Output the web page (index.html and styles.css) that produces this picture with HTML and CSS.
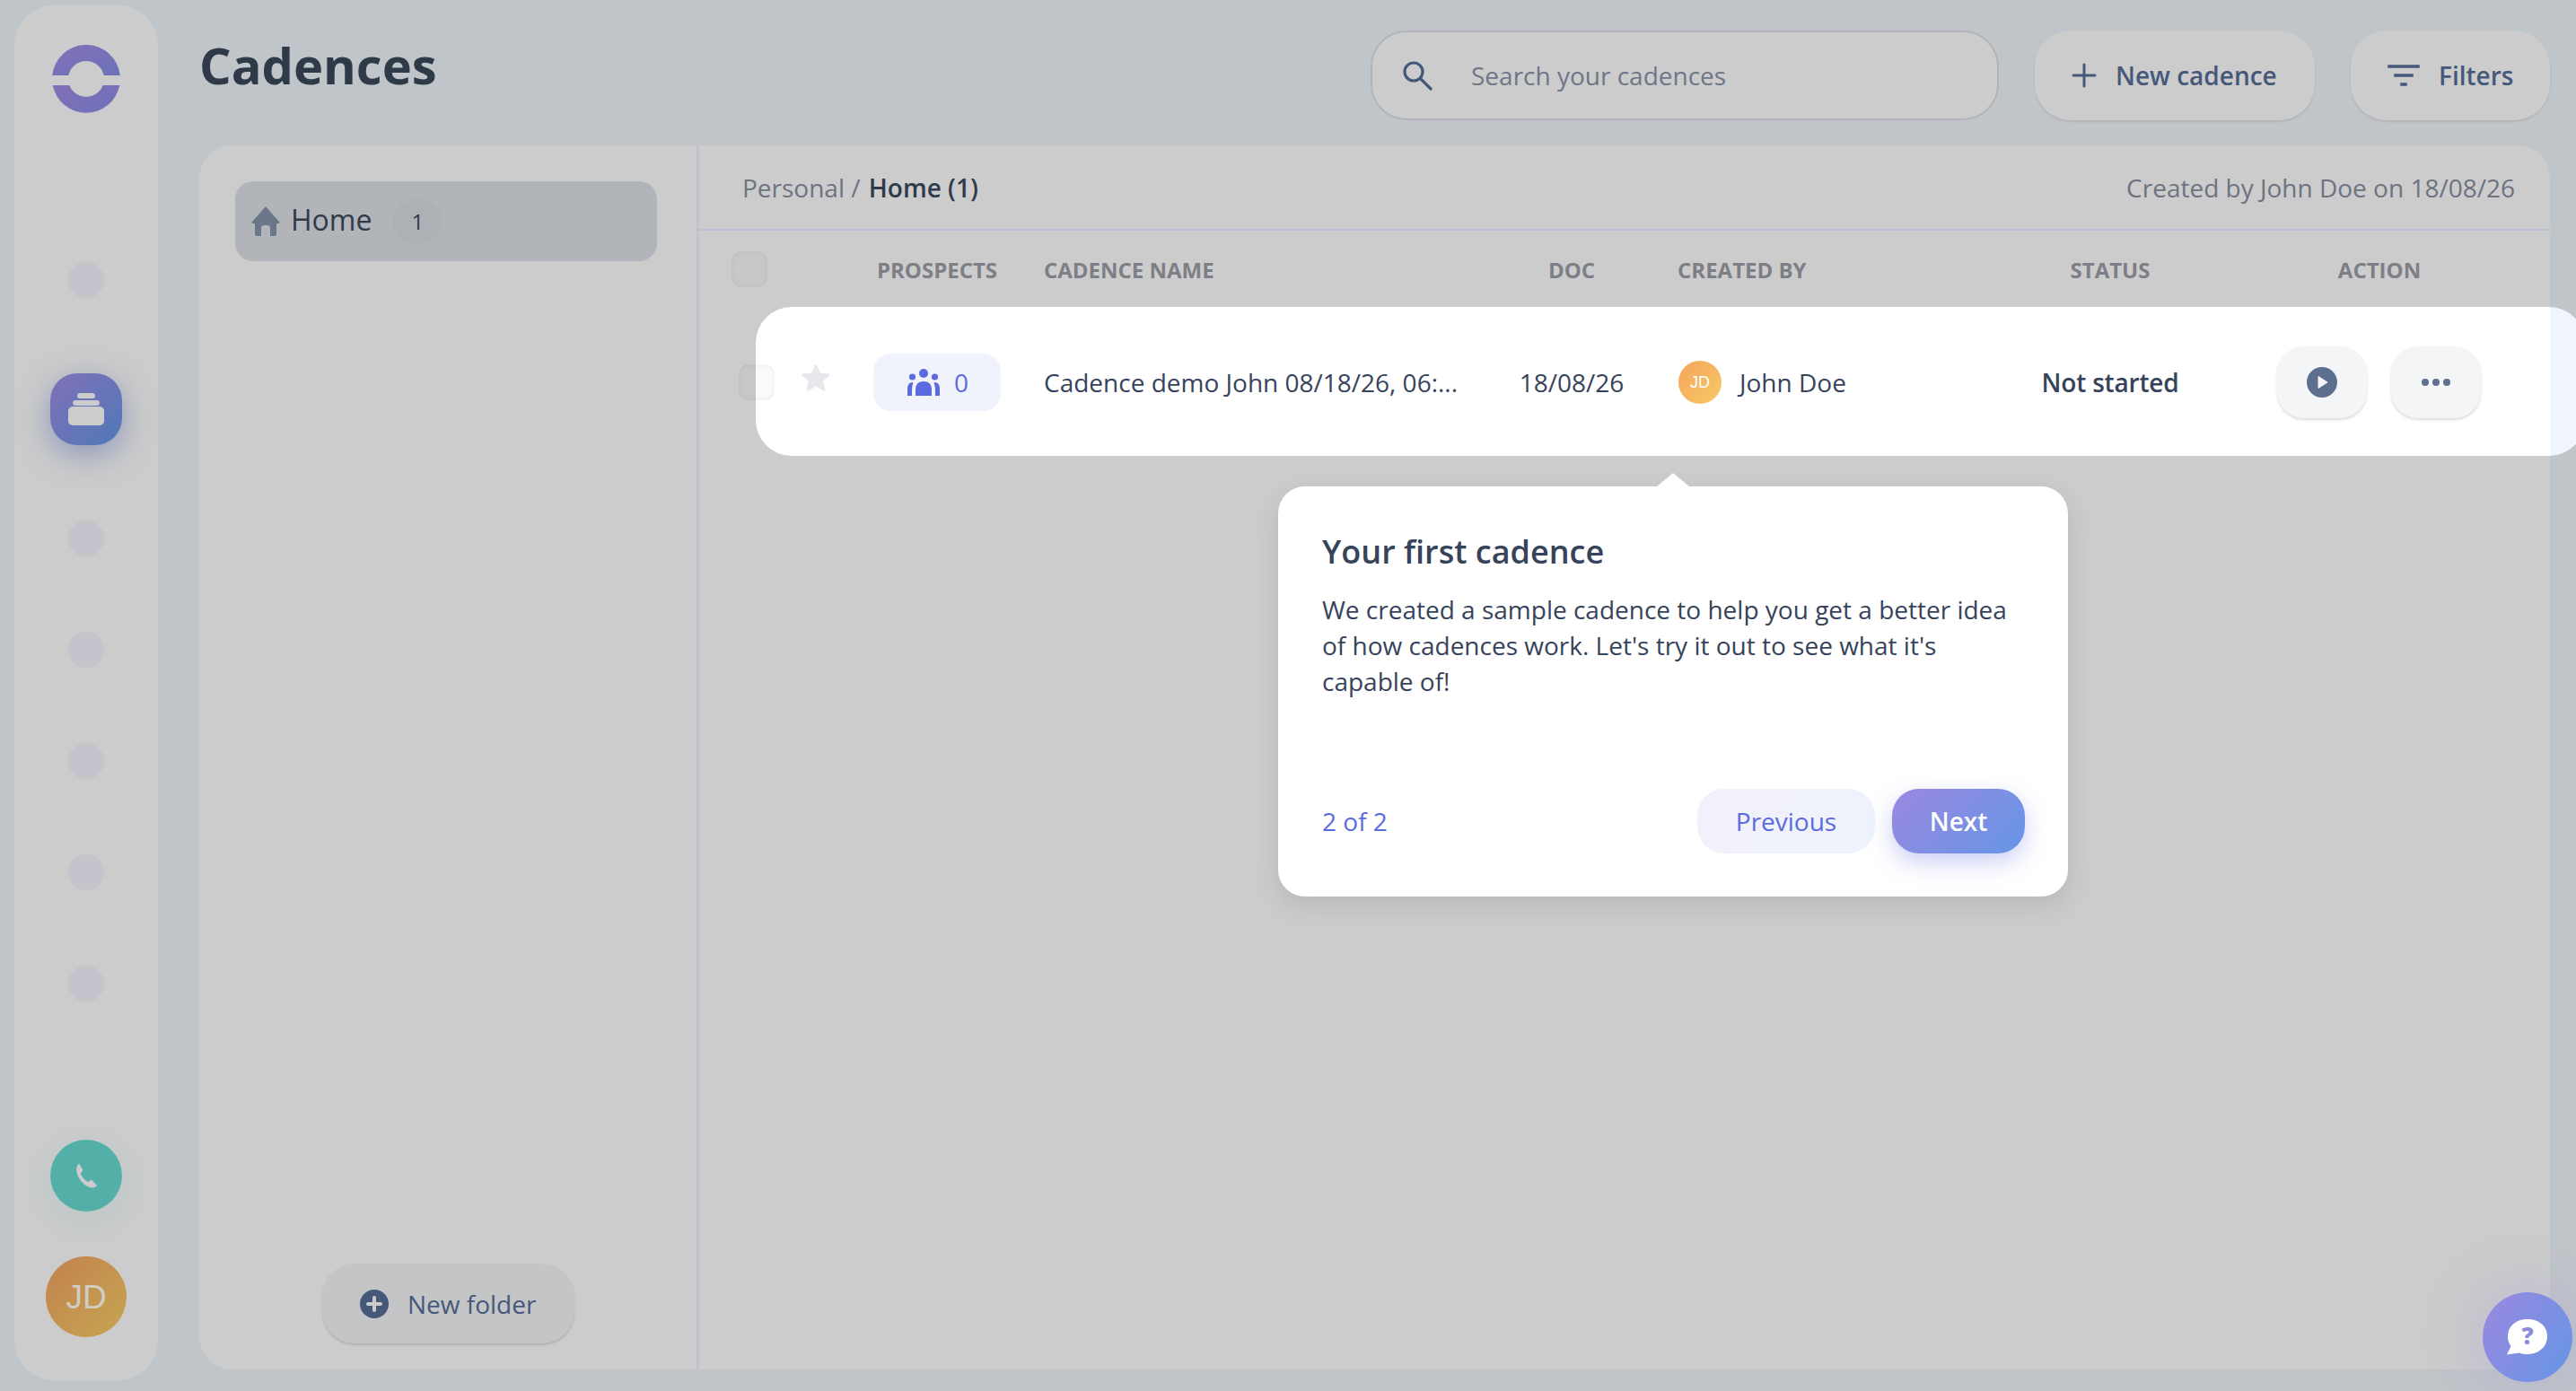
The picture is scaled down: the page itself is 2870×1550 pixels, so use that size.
FILE: index.html
```html
<!DOCTYPE html>
<html lang="en">
<head>
    <meta charset="UTF-8">
    <title>Cadences</title>
    <link rel="stylesheet" href="styles.css">
</head>
<body>
    <aside class="sidebar">
        <svg class="logo" viewBox="-38 -38 76 76" width="76" height="76">
            <defs>
                <linearGradient id="logo-grad" x1="0" y1="0" x2="1" y2="1">
                    <stop offset="0" stop-color="#8270b8"/>
                    <stop offset="1" stop-color="#6c72b8"/>
                </linearGradient>
            </defs>
            <path fill="url(#logo-grad)" d="M-37.8 -4A38 38 0 0 1 37.8 -4H19.6A20 20 0 0 0 -19.6 -4Z"/>
            <path fill="url(#logo-grad)" d="M-37.3 7A38 38 0 0 0 37.3 7H18.7A20 20 0 0 1 -18.7 7Z"/>
        </svg>
        <nav class="nav">
            <span class="nav-dot"></span>
            <span class="nav-active">
                <svg viewBox="0 0 40 36" width="40" height="36">
                    <rect x="10" y="0" width="20" height="6" rx="3" fill="#ccc"/>
                    <rect x="5" y="8" width="30" height="6" rx="3" fill="#ccc"/>
                    <rect x="0" y="15" width="40" height="21" rx="5" fill="#ccc"/>
                </svg>
            </span>
            <span class="nav-dot"></span>
            <span class="nav-dot"></span>
            <span class="nav-dot"></span>
            <span class="nav-dot"></span>
            <span class="nav-dot"></span>
        </nav>
        <span class="phone">
            <svg viewBox="0 0 24 24" width="34" height="34">
                <path fill="#ccc" d="M6.6 2.6l2.6 4.4c.3.5.2 1-.2 1.400L7.600 9.800c.6 2.600 3.400 6 6.200 7.200l1.500-1.300c.4-.4 1-.4 1.400 0l3.300 3.300c.4.500.3 1.100-.2 1.500-1 .8-2.300 1.200-3.600 1-5.500-.7-11.200-7.200-11.900-13.500-.2-2.100.5-4 1.800-5.200.2-.1.400-.2.500-.2z"/>
            </svg>
        </span>
        <span class="avatar">JD</span>
    </aside>

    <main class="main">
        <header class="topbar">
            <h1>Cadences</h1>
            <div class="topbar-tools">
                <label class="search">
                    <svg viewBox="0 0 34 34" width="34" height="34" fill="none" stroke="#46587a" stroke-width="3.200">
                        <circle cx="13" cy="13" r="10"/>
                        <path d="M20.500 20.500L32 32" stroke-linecap="round"/>
                    </svg>
                    <input type="text" placeholder="Search your cadences">
                </label>
                <button class="tool-btn new-btn">
                    <svg viewBox="0 0 28 28" width="28" height="28" stroke="#46587a" stroke-width="3" stroke-linecap="round">
                        <path d="M14 2V26M2 14H26"/>
                    </svg>
                    New cadence
                </button>
                <button class="tool-btn filter-btn">
                    <svg viewBox="0 0 36 26" width="36" height="26" stroke="#46587a" stroke-width="3.500" stroke-linecap="square">
                        <path d="M2 3H34M9 13H27M16 23H20"/>
                    </svg>
                    Filters
                </button>
            </div>
        </header>

        <section class="panel">
            <div class="folders">
                <div class="folder-item">
                    <svg viewBox="0 0 32 34" width="32" height="34">
                        <path fill="#6b7789" d="M16 0L31 17q1 2-1 2H28V31q0 2-2 2H21V24q0-3-3-3H14q-3 0-3 3V33H6q-2 0-2-2V19H2q-2 0-1-2Z"/>
                    </svg>
                    <span class="folder-name">Home</span>
                    <span class="folder-count">1</span>
                </div>
                <button class="new-folder">
                    <svg viewBox="0 0 32 32" width="32" height="32">
                        <circle cx="16" cy="16" r="16" fill="#46587a"/>
                        <path d="M16 9V23M9 16H23" stroke="#ccc" stroke-width="4" stroke-linecap="round"/>
                    </svg>
                    New folder
                </button>
            </div>
            <div class="content">
                <div class="crumbs">
                    <div>Personal / <strong>Home (1)</strong></div>
                    <div>Created by John Doe on 18/08/26</div>
                </div>
                <div class="table-head">
                    <div><span class="check"></span></div>
                    <div class="center">PROSPECTS</div>
                    <div class="name-col">CADENCE NAME</div>
                    <div class="center">DOC</div>
                    <div class="name-col">CREATED BY</div>
                    <div class="center">STATUS</div>
                    <div class="center">ACTION</div>
                </div>
            </div>
        </section>
    </main>

    <!-- highlighted row and tour popover sit over the dimmed page -->
    <div class="tour-row">
        <span class="row-check"></span>
        <div class="row-star">
            <svg viewBox="0 0 32 30" width="32" height="30">
                <path fill="#e6e8eb" stroke="#e6e8eb" stroke-width="3" stroke-linejoin="round" d="M16 2l4 9 10 .8-7.600 6.400 2.400 9.800L16 22.800 7.200 28l2.400-9.800L2 11.800 12 11z"/>
            </svg>
        </div>
        <div>
            <span class="prospects">
                <svg viewBox="0 0 36 30" width="36" height="30" fill="#5b6ae0">
                    <circle cx="18" cy="5" r="5"/>
                    <circle cx="5.500" cy="9" r="3.600"/>
                    <circle cx="30.500" cy="9" r="3.600"/>
                    <path d="M9 30V23q0-9 9-9t9 9v7Z"/>
                    <path d="M0 30V22q0-6 5-7 1 0 1.500.5Q5 19 5 23v7Z"/>
                    <path d="M36 30V22q0-6-5-7-1 0-1.500.5Q31 19 31 23v7Z"/>
                </svg>
                0
            </span>
        </div>
        <div class="name-col">Cadence demo John 08/18/26, 06:...</div>
        <div class="center">18/08/26</div>
        <div class="name-col creator">
            <span class="mini-avatar">JD</span>
            John Doe
        </div>
        <div class="center status">Not started</div>
        <div class="row-actions">
            <button class="icon-btn">
                <svg viewBox="0 0 34 34" width="34" height="34">
                    <circle cx="17" cy="17" r="17" fill="#5c6f8e"/>
                    <path d="M13 10.500L23 17L13 23.500Z" fill="#f4f5f7" stroke="#f4f5f7" stroke-linejoin="round"/>
                </svg>
            </button>
            <button class="icon-btn">
                <svg viewBox="0 0 32 8" width="32" height="8" fill="#5c6f8e">
                    <circle cx="4" cy="4" r="4"/>
                    <circle cx="16" cy="4" r="4"/>
                    <circle cx="28" cy="4" r="4"/>
                </svg>
            </button>
        </div>
    </div>

    <div class="tour-pop">
        <h3>Your first cadence</h3>
        <p>We created a sample cadence to help you get a better idea of how cadences work. Let's try it out to see what it's capable of!</p>
        <div class="tour-foot">
            <span class="tour-step">2 of 2</span>
            <button class="prev-btn">Previous</button>
            <button class="next-btn">Next</button>
        </div>
    </div>

    <button class="help-btn">
        <svg viewBox="0 0 46 40" width="46" height="40">
            <path fill="#fff" d="M23 0C35.500 0 45 7.500 45 19S35.500 39 23 39c-3.500 0-6.500-.5-9-1.500L0 39.500 4.500 30C2 27 1 23 1 19 1 7.500 10.500 0 23 0Z"/>
            <text x="23" y="28" text-anchor="middle" class="help-mark">?</text>
        </svg>
    </button>
</body>
</html>
```

FILE: styles.css
```css
* {
    box-sizing: border-box;
}
html, body {
    height: 100%;
}
body {
    margin: 0;
    padding: 6px 29px 12px 16px;
    display: flex;
    gap: 46px;
    overflow: hidden;
    position: relative;
    font-family: "Open Sans", sans-serif;
    font-size: 28px;
    color: #2f3a4a;
    background-color: #c0c5c9;
}
button {
    font-family: inherit;
    border: none;
}

/* sidebar */
.sidebar {
    width: 160px;
    flex-shrink: 0;
    padding: 44px 0 48px;
    display: flex;
    flex-direction: column;
    align-items: center;
    background-color: #cccccc;
    border-radius: 44px;
}
.nav {
    margin-top: 166px;
    display: flex;
    flex-direction: column;
    align-items: center;
    gap: 84px;
}
.nav-dot {
    width: 40px;
    height: 40px;
    border-radius: 50%;
    background-color: #c3c4cc;
}
.nav-active {
    width: 80px;
    height: 80px;
    border-radius: 30px;
    display: flex;
    align-items: center;
    justify-content: center;
    background: linear-gradient(135deg, #8170b8, #4f79b8);
    box-shadow: 0 10px 34px rgba(80, 100, 170, 0.5);
}
.phone {
    margin-top: auto;
    width: 80px;
    height: 80px;
    border-radius: 50%;
    display: flex;
    align-items: center;
    justify-content: center;
    background-color: #52b0a8;
    box-shadow: 0 10px 36px rgba(82, 176, 168, 0.15);
}
.avatar {
    margin-top: 50px;
    width: 90px;
    height: 90px;
    border-radius: 50%;
    display: flex;
    align-items: center;
    justify-content: center;
    padding-top: 2px;
    font-family: "Liberation Sans", sans-serif;
    font-size: 37px;
    color: #cfcdc4;
    background: linear-gradient(135deg, #c3824e, #c6a552);
}

/* top bar */
.main {
    flex: 1;
    min-width: 0;
    padding-bottom: 12px;
    display: flex;
    flex-direction: column;
}
.topbar {
    height: 156px;
    display: flex;
    justify-content: space-between;
    align-items: flex-start;
}
.topbar h1 {
    margin: 28px 0 0;
    font-size: 56px;
    line-height: 76px;
    font-weight: 700;
    color: #2e3a48;
}
.topbar-tools {
    margin-top: 28px;
    display: flex;
    gap: 40px;
}
.search {
    width: 700px;
    height: 100px;
    padding: 0 33px;
    display: flex;
    align-items: center;
    gap: 41px;
    border: 2px solid #b2b4b8;
    border-radius: 40px;
    background-color: #cccccc;
}
.search input {
    flex: 1;
    border: none;
    outline: none;
    background: transparent;
    font-family: inherit;
    font-size: 28px;
    color: #6d7787;
}
.search input::placeholder {
    color: #6d7787;
    opacity: 1;
}
.tool-btn {
    height: 100px;
    display: flex;
    align-items: center;
    gap: 21px;
    font-size: 28px;
    font-weight: 600;
    color: #46587a;
    background-color: #cccccc;
    border-radius: 40px;
    box-shadow: 0 2px 2px #b2b4b8;
}
.new-btn {
    width: 312px;
    padding-left: 41px;
}
.filter-btn {
    width: 222px;
    padding-left: 41px;
}

/* panel */
.panel {
    flex: 1;
    display: flex;
    background-color: #cccccc;
    border-radius: 36px;
    overflow: hidden;
}
.folders {
    width: 557px;
    flex-shrink: 0;
    padding: 40px 0 29px 40px;
    display: flex;
    flex-direction: column;
    border-right: 3px solid #c0c1d0;
}
.folder-item {
    width: 470px;
    height: 89px;
    padding-left: 18px;
    display: flex;
    align-items: center;
    gap: 12px;
    font-size: 32px;
    color: #2f3a4a;
    background-color: #b1b4b9;
    border-radius: 20px;
}
.folder-name {
    margin-top: -4px;
}
.folder-count {
    margin-left: 12px;
    width: 54px;
    height: 50px;
    border-radius: 50%;
    display: flex;
    align-items: center;
    justify-content: center;
    font-size: 24px;
    background-color: #adb0b4;
}
.new-folder {
    margin: auto 0 0 97px;
    width: 281px;
    height: 89px;
    padding-left: 42px;
    display: flex;
    align-items: center;
    gap: 21px;
    font-size: 28px;
    color: #46587a;
    background-color: #c4c5c7;
    border-radius: 36px;
    box-shadow: 0 2px 2px #b0b2b5;
}

/* table */
.content {
    flex: 1;
    min-width: 0;
}
.crumbs {
    height: 95px;
    padding: 0 39px 0 48px;
    display: flex;
    justify-content: space-between;
    align-items: center;
    color: #6d7380;
    border-bottom: 2px solid #bcc0d4;
}
.crumbs strong {
    margin-left: 2px;
    font-weight: 600;
    color: #2f3a4a;
}
.table-head {
    height: 87px;
    padding-left: 36px;
    display: grid;
    grid-template-columns: 158px 142px 566px 140px 400px 260px 340px;
    align-items: center;
    font-size: 24px;
    font-weight: 700;
    color: #7d7f86;
}
.center {
    text-align: center;
}
.name-col {
    padding-left: 48px;
}
.check {
    display: block;
    width: 40px;
    height: 40px;
    margin-top: -1px;
    border-radius: 11px;
    background-color: rgba(0, 0, 0, 0.01);
    box-shadow: inset 0 0 7px rgba(0, 0, 0, 0.07);
}

/* tour highlight */
.tour-row {
    position: absolute;
    left: 842px;
    top: 342px;
    width: 2038px;
    height: 166px;
    padding-top: 2px;
    display: grid;
    grid-template-columns: 131px 142px 566px 140px 400px 260px 340px;
    align-items: center;
    color: #36435a;
    border-radius: 40px;
    background: linear-gradient(to right, #fff 2000px, #f0f4fb 2000px);
}
.row-check {
    position: absolute;
    left: -19px;
    top: 64px;
    width: 40px;
    height: 40px;
    border-radius: 11px;
    background-color: rgba(0, 0, 0, 0.015);
    box-shadow: inset 0 0 7px rgba(0, 0, 0, 0.07);
}
.row-star {
    padding: 0 0 10px 51px;
    line-height: 0;
}
.prospects {
    width: 142px;
    height: 64px;
    padding-left: 38px;
    display: flex;
    align-items: center;
    gap: 16px;
    color: #5b6ae0;
    background-color: #f0f2fc;
    border-radius: 20px;
}
.creator {
    display: flex;
    align-items: center;
    gap: 20px;
    margin-left: 1px;
}
.mini-avatar {
    width: 48px;
    height: 48px;
    border-radius: 50%;
    display: flex;
    align-items: center;
    justify-content: center;
    font-family: "Liberation Sans", sans-serif;
    font-size: 18px;
    color: #fff;
    background: linear-gradient(135deg, #f4a55c, #f8ca66);
}
.status {
    font-weight: 600;
    letter-spacing: -0.2px;
}
.row-actions {
    padding-left: 56px;
    display: flex;
    gap: 27px;
}
.icon-btn {
    width: 100px;
    height: 80px;
    display: flex;
    align-items: center;
    justify-content: center;
    background-color: #f4f5f7;
    border-radius: 30px;
    box-shadow: 0 2px 3px #dcdcdc;
}

/* tour popover */
.tour-pop {
    position: absolute;
    left: 1424px;
    top: 542px;
    width: 880px;
    height: 457px;
    padding: 48px 48px 48px 49px;
    display: flex;
    flex-direction: column;
    background-color: #fff;
    border-radius: 30px;
    box-shadow: 0 10px 30px rgba(0, 0, 0, 0.1);
}
.tour-pop::before {
    content: "";
    position: absolute;
    left: 422px;
    top: -15px;
    width: 36px;
    height: 15px;
    background-color: #fff;
    clip-path: polygon(50% 0, 100% 100%, 0 100%);
}
.tour-pop h3 {
    margin: 1px 0 0;
    font-size: 36px;
    line-height: 48px;
    font-weight: 600;
    color: #36435a;
}
.tour-pop p {
    margin: 20px 0 0;
    line-height: 40px;
    color: #36435a;
}
.tour-foot {
    margin-top: auto;
    display: flex;
    align-items: center;
}
.tour-step {
    margin-right: auto;
    color: #5b6ae0;
}
.prev-btn, .next-btn {
    height: 72px;
    font-size: 28px;
    border-radius: 30px;
}
.prev-btn {
    width: 198px;
    color: #5b6ae0;
    background: linear-gradient(135deg, #f2f0fb, #eef3fc);
}
.next-btn {
    margin-left: 19px;
    width: 148px;
    font-weight: 600;
    color: #fff;
    background: linear-gradient(135deg, #9b88e0, #6596e6);
    box-shadow: 0 10px 26px rgba(110, 120, 225, 0.35);
}

/* help bubble */
.help-btn {
    position: absolute;
    left: 2766px;
    top: 1440px;
    width: 100px;
    height: 100px;
    padding: 0;
    display: flex;
    align-items: center;
    justify-content: center;
    border-radius: 50%;
    background: linear-gradient(120deg, #9b88e0, #6596e6);
    box-shadow: 0 0 70px rgba(150, 130, 225, 0.3);
}
.help-mark {
    font-family: "Open Sans", sans-serif;
    font-size: 26px;
    font-weight: 800;
    fill: #8f8ce0;
}
```
